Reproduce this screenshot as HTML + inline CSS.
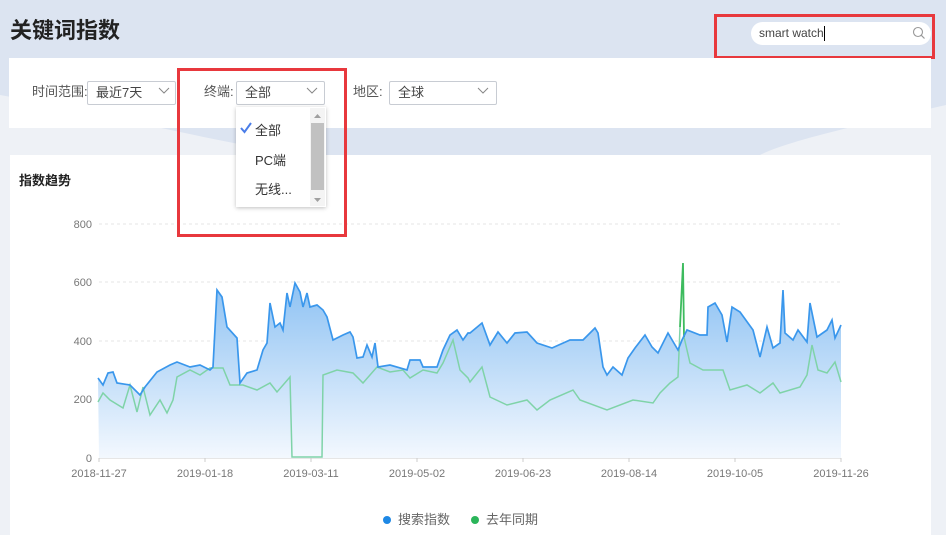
<!DOCTYPE html>
<html><head><meta charset="utf-8"><style>
*{margin:0;padding:0;box-sizing:border-box}
body{width:946px;height:535px;overflow:hidden;position:relative;background:#eef1f6;font-family:"Liberation Sans","Noto Sans CJK SC",sans-serif;color:#333}
.abs{position:absolute}
.panel{position:absolute;background:#fff}
.sel{position:absolute;height:24px;border:1px solid #c8ccd3;border-radius:2px;background:#fff;font-size:13px;line-height:22px;padding-left:8px;color:#444}
.lbl{position:absolute;font-size:13px;color:#555;line-height:24px}
.ax{font-size:11px;fill:#777;font-family:"Liberation Sans",sans-serif}
</style></head><body>
<svg class="abs" style="left:0;top:0" width="946" height="535">
<path d="M0 0H946V105C860 125 790 140 760 155H300C180 135 90 110 0 95Z" fill="#dce4f1"/>
</svg>
<div class="abs" style="left:10px;top:14px;font-size:22px;font-weight:bold;color:#222;line-height:34px">关键词指数</div>
<div class="abs" style="left:751px;top:22px;width:180px;height:23px;background:#fff;border-radius:12px;font-size:12px;line-height:23px;padding-left:8px;color:#444">smart watch<span style="display:inline-block;width:1px;height:15px;background:#000;vertical-align:middle"></span></div>
<svg class="abs" style="left:912px;top:26px" width="14" height="14"><circle cx="6" cy="6" r="4.5" fill="none" stroke="#999" stroke-width="1.1"/><path d="M9.3 9.3L12.5 12.5" stroke="#999" stroke-width="1.2"/></svg>
<div class="abs" style="left:714px;top:14px;width:221px;height:45px;border:3px solid #e8383d"></div>

<div class="panel" style="left:9px;top:58px;width:922px;height:70px"></div>
<div class="lbl" style="left:32px;top:80px">时间范围:</div>
<div class="sel" style="left:87px;top:81px;width:89px">最近7天</div>
<div class="lbl" style="left:204px;top:80px">终端:</div>
<div class="sel" style="left:236px;top:81px;width:89px">全部</div>
<div class="lbl" style="left:353px;top:80px">地区:</div>
<div class="sel" style="left:389px;top:81px;width:108px">全球</div>
<svg class="abs" style="left:0;top:0" width="946" height="130">
<path d="M159 88l5 5 5-5M307 88l5 5 5-5M478 88l5 5 5-5" fill="none" stroke="#888" stroke-width="1"/>
</svg>

<div class="panel" style="left:10px;top:155px;width:921px;height:380px"></div>
<div class="abs" style="left:19px;top:170px;font-size:13px;font-weight:bold;color:#222">指数趋势</div>

<svg class="abs" style="left:0;top:0" width="946" height="535">
<defs><linearGradient id="g" x1="0" y1="0" x2="0" y2="1"><stop offset="0" stop-color="#8ec2f3"/><stop offset="1" stop-color="#f3f8fe"/></linearGradient></defs>
<g stroke="#e6e6e6" stroke-dasharray="3,3"><path d="M99 224H841M99 282H841M99 341H841M99 399H841"/></g>
<path d="M99 458H841" stroke="#ccc"/>
<g stroke="#ccc"><path d="M99 458v4M205 458v4M311 458v4M417 458v4M523 458v4M629 458v4M735 458v4M841 458v4"/></g>
<g class="ax" text-anchor="end"><text x="92" y="228">800</text><text x="92" y="286">600</text><text x="92" y="345">400</text><text x="92" y="403">200</text><text x="92" y="462">0</text></g>
<g class="ax" text-anchor="middle"><text x="99" y="477">2018-11-27</text><text x="205" y="477">2019-01-18</text><text x="311" y="477">2019-03-11</text><text x="417" y="477">2019-05-02</text><text x="523" y="477">2019-06-23</text><text x="629" y="477">2019-08-14</text><text x="735" y="477">2019-10-05</text><text x="841" y="477">2019-11-26</text></g>
<polygon fill="url(#g)" points="99,458 98,378 103,385 108,373 113,372 117,383 130,385 140,395 145,387 157,372 170,365 177,362 190,367 200,365 210,370 213,367 217,290 222,297 227,327 237,338 240,383 247,373 257,370 263,350 267,343 270,303 275,327 280,323 283,330 287,293 290,307 295,283 300,292 303,307 307,293 310,307 317,305 323,310 327,317 333,340 343,335 350,332 353,337 357,358 363,357 367,345 372,357 375,343 378,367 390,365 407,370 410,360 420,360 423,367 437,367 443,350 450,335 457,330 463,340 468,333 470,333 482,323 490,345 498,332 507,343 515,333 527,332 537,343 552,348 570,340 583,340 595,328 598,333 603,367 607,375 613,367 622,375 628,358 635,348 645,335 652,347 658,353 668,333 678,350 682,340 687,330 700,335 707,335 708,307 715,303 722,315 727,342 732,307 740,312 753,330 760,357 767,327 773,348 780,343 783,290 785,333 793,340 798,330 807,342 810,303 817,337 827,330 832,320 835,338 841,325 841,458"/>
<polyline fill="none" stroke="#7fd3a8" stroke-width="1.5" points="98,402 103,393 110,400 123,408 130,385 137,412 143,387 150,415 160,400 167,413 173,400 177,377 190,370 200,375 210,368 223,368 230,385 243,385 257,390 270,383 277,392 290,377 292,457 322,457 323,375 337,370 353,373 363,383 377,367 390,372 403,370 410,378 423,370 437,373 443,363 453,340 460,370 468,378 470,382 482,367 490,397 507,405 527,400 537,410 550,400 573,390 580,400 607,410 633,400 653,403 660,393 670,383 678,377 680,327"/>
<polyline fill="none" stroke="#3dbb5e" stroke-width="1.8" points="680,327 683,263 684,337"/>
<polyline fill="none" stroke="#7fd3a8" stroke-width="1.5" points="684,337 690,363 703,370 723,370 730,390 747,385 760,393 773,383 780,393 800,387 807,375 812,345 818,370 827,373 835,362 841,382"/>
<polyline fill="none" stroke="#3a97ec" stroke-width="1.7" points="98,378 103,385 108,373 113,372 117,383 130,385 140,395 145,387 157,372 170,365 177,362 190,367 200,365 210,370 213,367 217,290 222,297 227,327 237,338 240,383 247,373 257,370 263,350 267,343 270,303 275,327 280,323 283,330 287,293 290,307 295,283 300,292 303,307 307,293 310,307 317,305 323,310 327,317 333,340 343,335 350,332 353,337 357,358 363,357 367,345 372,357 375,343 378,367 390,365 407,370 410,360 420,360 423,367 437,367 443,350 450,335 457,330 463,340 468,333 470,333 482,323 490,345 498,332 507,343 515,333 527,332 537,343 552,348 570,340 583,340 595,328 598,333 603,367 607,375 613,367 622,375 628,358 635,348 645,335 652,347 658,353 668,333 678,350 682,340 687,330 700,335 707,335 708,307 715,303 722,315 727,342 732,307 740,312 753,330 760,357 767,327 773,348 780,343 783,290 785,333 793,340 798,330 807,342 810,303 817,337 827,330 832,320 835,338 841,325"/>
<circle cx="387" cy="520" r="4" fill="#1e88e5"/><text x="398" y="524" font-size="13" fill="#666" font-family="Liberation Sans,Noto Sans CJK SC,sans-serif">搜索指数</text>
<circle cx="475" cy="520" r="4" fill="#2bb55a"/><text x="486" y="524" font-size="13" fill="#666" font-family="Liberation Sans,Noto Sans CJK SC,sans-serif">去年同期</text>
</svg>

<div class="abs" style="left:236px;top:107px;width:90px;height:100px;background:#fff;box-shadow:0 1px 4px rgba(0,0,0,.25)"></div>
<div class="abs" style="left:310px;top:108px;width:15px;height:98px;background:#f4f4f4"></div>
<div class="abs" style="left:311px;top:123px;width:13px;height:67px;background:#c1c1c1"></div>
<svg class="abs" style="left:310px;top:108px" width="15" height="98"><path d="M4 10l3.5-4 3.5 4z M4 90l3.5 4 3.5-4z" fill="#a0a0a0"/></svg>
<svg class="abs" style="left:239px;top:121px" width="14" height="14"><path d="M2 7l3.5 4L12 2" fill="none" stroke="#4a7de8" stroke-width="2"/></svg>
<div class="abs" style="left:255px;top:120px;font-size:13px;color:#333">全部</div>
<div class="abs" style="left:255px;top:150px;font-size:13px;color:#333">PC端</div>
<div class="abs" style="left:255px;top:179px;font-size:13px;color:#333">无线...</div>
<div class="abs" style="left:177px;top:68px;width:170px;height:169px;border:3px solid #e8383d"></div>
</body></html>
